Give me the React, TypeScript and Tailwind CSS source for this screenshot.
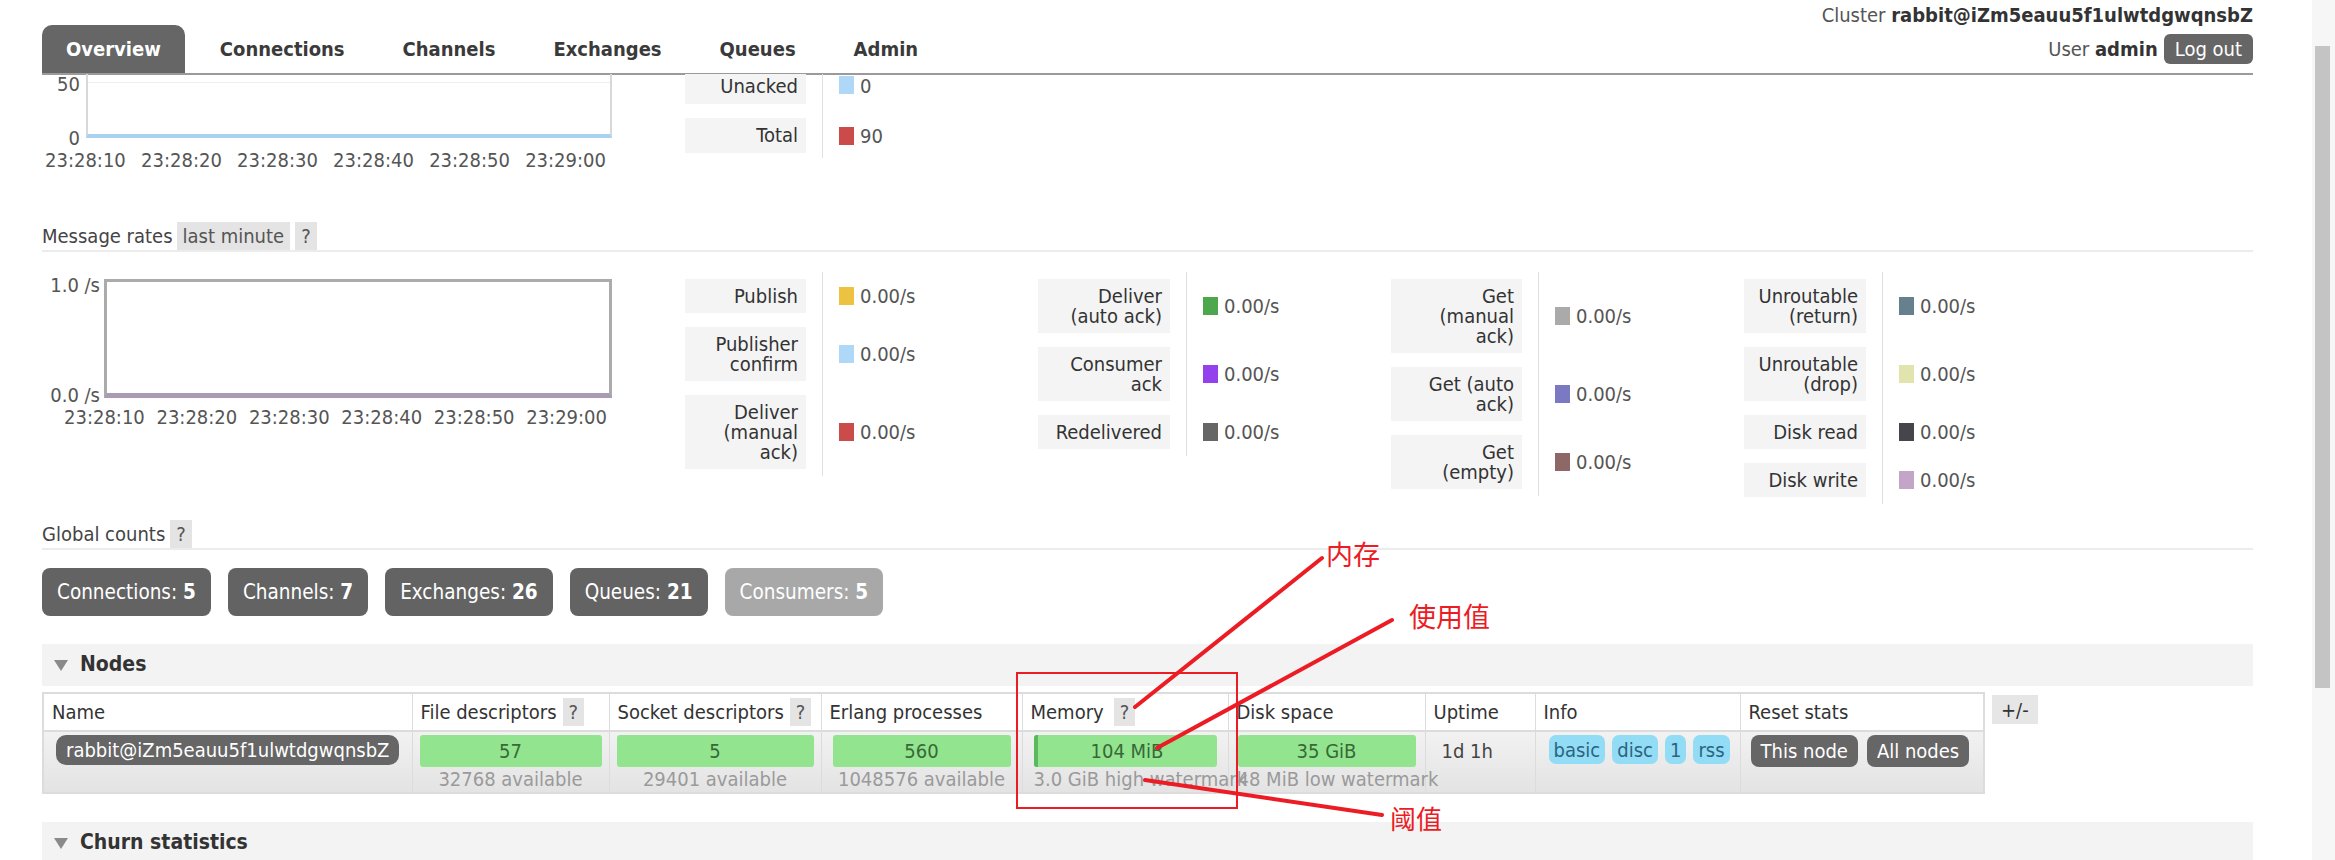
import { Fragment } from "react";

type LegendRow = { lines: string[]; color: string; value: string };

const times = ["23:28:10", "23:28:20", "23:28:30", "23:28:40", "23:28:50", "23:29:00"];

const tabs = ["Overview", "Connections", "Channels", "Exchanges", "Queues", "Admin"];

const legendCols: { cols: string; rows: LegendRow[] }[] = [
  {
    cols: "grid-cols-[137px_auto]",
    rows: [
      { lines: ["Publish"], color: "bg-[#edc240]", value: "0.00/s" },
      { lines: ["Publisher", "confirm"], color: "bg-[#afd8f8]", value: "0.00/s" },
      { lines: ["Deliver", "(manual", "ack)"], color: "bg-[#cb4b4b]", value: "0.00/s" },
    ],
  },
  {
    cols: "grid-cols-[148px_auto]",
    rows: [
      { lines: ["Deliver", "(auto ack)"], color: "bg-[#4da74d]", value: "0.00/s" },
      { lines: ["Consumer", "ack"], color: "bg-[#9440ed]", value: "0.00/s" },
      { lines: ["Redelivered"], color: "bg-[#666666]", value: "0.00/s" },
    ],
  },
  {
    cols: "grid-cols-[147px_auto]",
    rows: [
      { lines: ["Get", "(manual", "ack)"], color: "bg-[#aaaaaa]", value: "0.00/s" },
      { lines: ["Get (auto", "ack)"], color: "bg-[#7c79c3]", value: "0.00/s" },
      { lines: ["Get", "(empty)"], color: "bg-[#8e6767]", value: "0.00/s" },
    ],
  },
  {
    cols: "grid-cols-[138px_auto]",
    rows: [
      { lines: ["Unroutable", "(return)"], color: "bg-[#67808e]", value: "0.00/s" },
      { lines: ["Unroutable", "(drop)"], color: "bg-[#e2e4ae]", value: "0.00/s" },
      { lines: ["Disk read"], color: "bg-[#45454b]", value: "0.00/s" },
      { lines: ["Disk write"], color: "bg-[#c3a6c7]", value: "0.00/s" },
    ],
  },
];

const counts = [
  { label: "Connections", n: 5, dim: false },
  { label: "Channels", n: 7, dim: false },
  { label: "Exchanges", n: 26, dim: false },
  { label: "Queues", n: 21, dim: false },
  { label: "Consumers", n: 5, dim: true },
];

const Legend = ({ cols, rows }: { cols: string; rows: LegendRow[] }) => (
  <div className={`grid pt-[4px] ${cols}`}>
    {rows.map((r) => (
      <Fragment key={r.lines.join(" ")}>
        <div className="py-[7px] pr-[16px]">
          <div className="bg-[#f4f4f4] px-[8px] py-[7px] text-right leading-[20px] text-[#333]">
            {r.lines.map((l) => (
              <div key={l}>{l}</div>
            ))}
          </div>
        </div>
        <div className="flex items-center gap-[6px] border-l border-[#e0e0e0] py-[7px] pl-[16px] text-[#555]">
          <span className="h-[18px] w-[15px] shrink-0">
            <span className={`block h-full w-full ${r.color}`} />
          </span>
          <span>{r.value}</span>
        </div>
      </Fragment>
    ))}
  </div>
);

const Help = () => (
  <span className="ml-[5px] flex items-center bg-[#e4e4e4] px-[6px] text-[#555]">?</span>
);

const Section = ({ title }: { title: string }) => (
  <div className="flex h-[42px] items-center gap-[12px] bg-[#f3f3f3] pl-[12px]">
    <svg width="14" height="11" viewBox="0 0 14 11">
      <polygon points="0,0 14,0 7,11" fill="#8a8a8a" />
    </svg>
    <span className="text-[21px] font-bold text-[#333]">{title}</span>
  </div>
);

const Bar = ({ value, sub, used }: { value: string; sub: string; used?: boolean }) => (
  <div>
    <div className="flex h-[32px] overflow-hidden rounded-[3px] bg-[#92e58e] text-[#386838]">
      {used && <div className="w-[4px] bg-[#5cb85c]" />}
      <div className="flex flex-1 items-center justify-center">{value}</div>
    </div>
    <div className="mt-[2px] whitespace-nowrap text-center leading-[20px] text-[#9a9a9a]">{sub}</div>
  </div>
);

export default function App() {
  return (
    <div className="flex h-[860px] w-[2335px] overflow-hidden bg-white text-[20px] text-[#444] [font-family:'DejaVu_Sans_Condensed','DejaVu_Sans',sans-serif]">
      <div className="relative flex-1 pl-[42px] pr-[59px]">
        {/* header */}
        <div className="flex h-[73px] items-end justify-between">
          <div className="flex gap-[12px]">
            {tabs.map((t, i) => (
              <div
                key={t}
                className={
                  i === 0
                    ? "flex h-[48px] items-center rounded-t-[10px] bg-[#666] px-[24px] text-[20px] font-bold text-white"
                    : "flex h-[48px] items-center px-[23px] text-[20px] font-bold text-[#3a3a3a]"
                }
              >
                {t}
              </div>
            ))}
          </div>
          <div className="flex flex-col items-end self-stretch pt-[4px]">
            <div className="leading-[22px] text-[#555]">
              Cluster <span className="font-bold text-[#333]">rabbit@iZm5eauu5f1ulwtdgwqnsbZ</span>
            </div>
            <div className="mt-[8px] flex items-center gap-[6px] text-[#555]">
              <span>
                User <span className="font-bold text-[#333]">admin</span>
              </span>
              <span className="flex h-[30px] items-center rounded-[6px] bg-[#666] px-[11px] text-white">Log out</span>
            </div>
          </div>
        </div>
        <div className="h-[2px] bg-[#9a9a9a]" />

        {/* queued messages chart (scrolled) */}
        <div className="-mt-px flex items-start">
          <div className="w-[570px]">
            <div className="flex items-start">
              <div className="flex h-[74px] w-[44px] flex-col items-end justify-between pr-[6px] leading-[20px] text-[#555]">
                <span>50</span>
                <span>0</span>
              </div>
              <div className="h-[64px] w-[526px] border-x-2 border-b-[4px] border-x-[#d8d8d8] border-b-[#a9d2f0]">
                <div className="mt-[8px] h-px bg-[#eeeeee]" />
              </div>
            </div>
            <div className="ml-[3px] mt-[2px] flex w-[561px] justify-between text-[20px] leading-[20px] text-[#555]">
              {times.map((t) => (
                <span key={t}>{t}</span>
              ))}
            </div>
          </div>
          <div className="ml-[73px] grid grid-cols-[137px_auto]">
            <div className="pb-[14px] pr-[16px]">
              <div className="h-[30px] bg-[#f4f4f4] pr-[8px] pt-[2px] text-right leading-[20px] text-[#333]">Unacked</div>
            </div>
            <div className="flex items-start gap-[6px] border-l border-[#e0e0e0] pb-[14px] pl-[16px] pt-[2px] leading-[20px] text-[#555]">
              <span className="h-[18px] w-[15px] bg-[#afd8f8]" />
              <span>0</span>
            </div>
            <div className="pb-[5px] pr-[16px]">
              <div className="bg-[#f4f4f4] px-[8px] py-[7px] text-right leading-[21px] text-[#333]">Total</div>
            </div>
            <div className="flex items-center gap-[6px] border-l border-[#e0e0e0] pb-[5px] pl-[16px] text-[#555]">
              <span className="h-[18px] w-[15px] bg-[#cb4b4b]" />
              <span>90</span>
            </div>
          </div>
        </div>

        {/* message rates */}
        <div className="mt-[52px] flex h-[30px] border-b-2 border-[#ececec]">
          <span className="leading-[28px] text-[#444]">Message rates</span>
          <span className="ml-[4px] flex items-center bg-[#e4e4e4] px-[6px] text-[#555]">last minute</span>
          <Help />
        </div>
        <div className="mt-[16px] flex items-start">
          <div className="w-[570px] pt-[7px]">
            <div className="flex items-start">
              <div className="flex h-[130px] w-[62px] flex-col items-end justify-between pr-[4px] leading-[20px] text-[#555]">
                <span>1.0 /s</span>
                <span>0.0 /s</span>
              </div>
              <div className="mt-[4px] h-[119px] w-[508px] border-[3px] border-b-[5px] border-[#ababab] border-b-[#a99bb1]" />
            </div>
            <div className="ml-[22px] mt-[2px] flex w-[543px] justify-between text-[20px] leading-[20px] text-[#555]">
              {times.map((t) => (
                <span key={t}>{t}</span>
              ))}
            </div>
          </div>
          <div className="ml-[73px] flex">
            {legendCols.map((c, i) => (
              <div key={i} className="w-[353px]">
                <Legend cols={c.cols} rows={c.rows} />
              </div>
            ))}
          </div>
        </div>

        {/* global counts */}
        <div className="mt-[16px] flex h-[30px] border-b-2 border-[#ececec]">
          <span className="leading-[28px] text-[#444]">Global counts</span>
          <Help />
        </div>
        <div className="mt-[18px] flex gap-[17px]">
          {counts.map((c) => (
            <div
              key={c.label}
              className={
                c.dim
                  ? "flex h-[48px] items-center rounded-[8px] bg-[#a8a8a8] px-[15px] text-[20.5px] text-white"
                  : "flex h-[48px] items-center rounded-[8px] bg-[#636363] px-[15px] text-[20.5px] text-white"
              }
            >
              {c.label}:&nbsp;<span className="font-bold">{c.n}</span>
            </div>
          ))}
        </div>

        {/* nodes */}
        <div className="mt-[28px]">
          <Section title="Nodes" />
        </div>
        <div className="mt-[6px] flex items-start gap-[7px]">
          <table className="w-[1941px] table-fixed border-collapse border-2 border-[#dcdcdc]">
            <thead>
              <tr className="h-[38px] border-b-2 border-[#dcdcdc] bg-white">
                <th className="w-[369px] border-r border-[#dcdcdc] px-[8px] text-left font-normal text-[#333]">Name</th>
                <th className="w-[197px] border-r border-[#dcdcdc] px-[8px] text-left font-normal text-[#333]">
                  <span className="flex h-[30px] items-center whitespace-nowrap">
                    File descriptors <span className="ml-[6px] flex h-[28px] items-center bg-[#e4e4e4] px-[6px] text-[#555]">?</span>
                  </span>
                </th>
                <th className="w-[212px] border-r border-[#dcdcdc] px-[8px] text-left font-normal text-[#333]">
                  <span className="flex h-[30px] items-center whitespace-nowrap">
                    Socket descriptors <span className="ml-[6px] flex h-[28px] items-center bg-[#e4e4e4] px-[6px] text-[#555]">?</span>
                  </span>
                </th>
                <th className="w-[201px] border-r border-[#dcdcdc] px-[8px] text-left font-normal text-[#333]">Erlang processes</th>
                <th className="w-[206px] border-r border-[#dcdcdc] px-[8px] text-left font-normal text-[#333]">
                  <span className="flex h-[30px] items-center">
                    Memory <span className="ml-[10px] flex h-[28px] items-center bg-[#e4e4e4] px-[6px] text-[#555]">?</span>
                  </span>
                </th>
                <th className="w-[197px] border-r border-[#dcdcdc] px-[8px] text-left font-normal text-[#333]">Disk space</th>
                <th className="w-[110px] border-r border-[#dcdcdc] px-[8px] text-left font-normal text-[#333]">Uptime</th>
                <th className="w-[205px] border-r border-[#dcdcdc] px-[8px] text-left font-normal text-[#333]">Info</th>
                <th className="w-[244px] px-[8px] text-left font-normal text-[#333]">Reset stats</th>
              </tr>
            </thead>
            <tbody>
              <tr className="h-[62px] bg-linear-to-b from-[#f2f2f2] to-[#e3e3e3]">
                <td className="border-r border-[#dcdcdc] px-[12px] pb-[6px] pt-[3px] align-top">
                  <span className="inline-flex h-[30px] items-center whitespace-nowrap rounded-[10px] bg-[#666] px-[10px] text-white">
                    rabbit@iZm5eauu5f1ulwtdgwqnsbZ
                  </span>
                </td>
                <td className="border-r border-[#dcdcdc] px-[7px] pt-[3px] align-top">
                  <Bar value="57" sub="32768 available" />
                </td>
                <td className="border-r border-[#dcdcdc] px-[7px] pt-[3px] align-top">
                  <Bar value="5" sub="29401 available" />
                </td>
                <td className="border-r border-[#dcdcdc] px-[11px] pt-[3px] align-top">
                  <Bar value="560" sub="1048576 available" />
                </td>
                <td className="border-r border-[#dcdcdc] px-[11px] pt-[3px] align-top">
                  <Bar value="104 MiB" sub="3.0 GiB high watermark" used />
                </td>
                <td className="border-r border-[#dcdcdc] px-[9px] pt-[3px] align-top">
                  <Bar value="35 GiB" sub="48 MiB low watermark" />
                </td>
                <td className="border-r border-[#dcdcdc] px-[16px] pt-[3px] align-top leading-[32px] text-[#444]">1d 1h</td>
                <td className="border-r border-[#dcdcdc] px-[13px] pt-[3px] align-top">
                  <div className="flex gap-[7px]">
                    {["basic", "disc", "1", "rss"].map((b) => (
                      <span key={b} className="flex h-[29px] items-center rounded-[7px] bg-[#92dcf5] px-[5px] text-[#2c6480]">
                        {b}
                      </span>
                    ))}
                  </div>
                </td>
                <td className="px-[10px] pt-[3px] align-top">
                  <div className="flex gap-[9px]">
                    <span className="flex h-[32px] items-center whitespace-nowrap rounded-[8px] bg-[#666] px-[10px] text-white">This node</span>
                    <span className="flex h-[32px] items-center whitespace-nowrap rounded-[8px] bg-[#666] px-[10px] text-white">All nodes</span>
                  </div>
                </td>
              </tr>
            </tbody>
          </table>
          <span className="mt-[3px] flex h-[29px] items-center bg-[#e6e6e6] px-[9px] text-[#333]">+/-</span>
        </div>

        <div className="mt-[28px]">
          <Section title="Churn statistics" />
        </div>

        {/* red annotations drawn over the screenshot */}
        <svg className="pointer-events-none absolute left-0 top-0" width="2312" height="860" viewBox="0 0 2312 860">
          <rect x="1017" y="673" width="220" height="135" fill="none" stroke="#ec1c24" strokeWidth="2" />
          <line x1="1322" y1="558" x2="1135" y2="707" stroke="#ec1c24" strokeWidth="4" strokeLinecap="round" />
          <line x1="1392" y1="620" x2="1157" y2="748" stroke="#ec1c24" strokeWidth="4" strokeLinecap="round" />
          <line x1="1145" y1="780" x2="1382" y2="815" stroke="#ec1c24" strokeWidth="4" strokeLinecap="round" />
        </svg>
        <span className="absolute left-[1326px] top-[540px] text-[27px] leading-none text-[#ec1c24] [font-family:'Noto_Sans_CJK_SC',sans-serif]">
          内存
        </span>
        <span className="absolute left-[1409px] top-[602px] text-[27px] leading-none text-[#ec1c24] [font-family:'Noto_Sans_CJK_SC',sans-serif]">
          使用值
        </span>
        <span className="absolute left-[1390px] top-[805px] text-[26px] leading-none text-[#ec1c24] [font-family:'Noto_Sans_CJK_SC',sans-serif]">
          阈值
        </span>
      </div>

      {/* scrollbar */}
      <div className="w-[23px] bg-[#f6f6f6] pl-[3px]">
        <div className="mt-[46px] h-[642px] w-[15px] bg-[#c4c4c4]" />
      </div>
    </div>
  );
}
